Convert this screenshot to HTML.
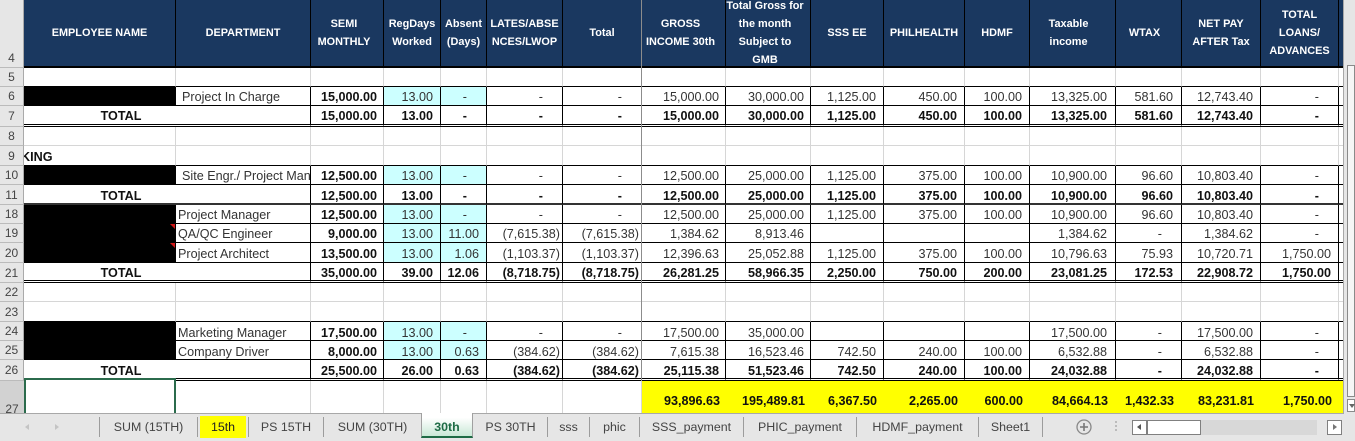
<!DOCTYPE html>
<html><head><meta charset="utf-8"><style>
html,body{margin:0;padding:0;width:1355px;height:441px;overflow:hidden;background:#e6e6e6;font-family:"Liberation Sans",sans-serif}
#wrap{position:absolute;left:0;top:0;width:1343px;height:413px;overflow:hidden;background:#fff}
table{position:absolute;left:0;top:0;border-collapse:separate;border-spacing:0;table-layout:fixed;width:1343px;font-size:12.6px;color:#333}
td{box-sizing:border-box;padding:2px 7px 0 0;border-right:1px solid #d6d6d6;border-bottom:1px solid #d6d6d6;white-space:nowrap;overflow:hidden;text-align:right;line-height:14px;vertical-align:middle}
td.h{background:#e6e6e6;border-right:1px solid #aaa;border-bottom:1px solid #bbb;text-align:center;padding:0;font-size:12px;color:#444}
tr.head td{background:#1a3860;color:#fff;font-weight:bold;font-size:10.9px;line-height:18px;text-align:center;padding:0;border-right:1px solid #000;border-bottom:2px solid #000;overflow:visible;white-space:normal}
tr.head td.h{background:#e6e6e6;color:#444;font-weight:normal;font-size:12px;border-right:1px solid #aaa;border-bottom:1px solid #bbb;vertical-align:bottom;line-height:17px}
tr.head td div{height:66px;display:flex;align-items:center;justify-content:center}
tr.d td:not(.h){border-right:1px solid #000;border-bottom:1px solid #000}
tr.t td:not(.h){border-right:1px solid #000;border-bottom:1px solid #000;font-weight:bold;color:#111}
tr.dbl td:not(.h){border-bottom:3px double #000}
tr.above td:not(.h){border-bottom:1px solid #000}
tr.thick td:not(.h){border-bottom:2px solid #333}
tr.lo td:not(.h){padding-top:4px}
tr td:nth-last-child(15){padding-right:6px}
tr td:nth-last-child(10),tr td:nth-last-child(9){padding-right:6px}
tr td:nth-last-child(5),tr td:nth-last-child(4){padding-right:8px}
tr td:last-child{border-right:0!important}
td.n{text-align:left;padding-left:0;padding-right:0}
td.n1{text-align:left;padding-left:6px!important;padding-right:0!important}
td.n2{text-align:left;padding-left:2px!important;padding-right:0!important}
td.b{background:#ccffff}
td.bk{background:#000;padding:0}
td.d{padding-right:19px!important}
td.p{padding-right:2px!important}
td.s{font-weight:bold;color:#111}
td.tt{text-align:center;font-weight:bold;padding-right:92px!important;color:#111}
tr.y td{border:0!important;padding-top:8px;color:#111;font-weight:bold}
tr.y td:not(.h):not(.e){background:#ffff00}
tr.y td.e{background:#fff;border-right:1px solid #d6d6d6!important}
tr.y td.h{background:#d2d2d2;vertical-align:bottom;font-weight:normal;color:#444;padding:0;line-height:8px;height:32px}
.a{position:absolute}
.tab{position:absolute;top:419px;height:16px;line-height:16px;font-size:12.4px;color:#444;text-align:center;white-space:nowrap}
.sep{position:absolute;top:417px;height:20px;width:1px;background:#9c9c9c}
</style></head><body>
<div id="wrap">
<table>
<colgroup><col style="width:24px"><col style="width:152px"><col style="width:135px"><col style="width:73px"><col style="width:57px"><col style="width:46px"><col style="width:76px"><col style="width:79px"><col style="width:84px"><col style="width:85px"><col style="width:73px"><col style="width:81px"><col style="width:65px"><col style="width:86px"><col style="width:66px"><col style="width:79px"><col style="width:78px"><col style="width:4px"></colgroup>
<tr class="head" style="height:68px"><td class="h">4</td><td><div>EMPLOYEE NAME</div></td><td><div>DEPARTMENT</div></td><td><div>SEMI<br>MONTHLY</div></td><td><div>RegDays<br>Worked</div></td><td><div>Absent<br>(Days)</div></td><td><div>LATES/ABSE<br>NCES/LWOP</div></td><td><div>Total</div></td><td><div>GROSS<br>INCOME 30th</div></td><td><div>Total Gross for<br>the month<br>Subject to<br>GMB</div></td><td><div>SSS EE</div></td><td><div>PHILHEALTH</div></td><td><div>HDMF</div></td><td><div>Taxable<br>income</div></td><td><div>WTAX</div></td><td><div>NET PAY<br>AFTER Tax</div></td><td><div>TOTAL<br>LOANS/<br>ADVANCES</div></td><td><div></div></td></tr>
<tr class="above" style="height:19px"><td class="h" style="height:19px">5</td><td></td><td></td><td></td><td></td><td></td><td></td><td></td><td></td><td></td><td></td><td></td><td></td><td></td><td></td><td></td><td></td><td></td></tr>
<tr class="d" style="height:19px"><td class="h">6</td><td class="bk"></td><td class="n1">Project In Charge</td><td class="s">15,000.00</td><td class="b">13.00</td><td class="b d">-</td><td class="d">-</td><td class="d">-</td><td>15,000.00</td><td>30,000.00</td><td>1,125.00</td><td>450.00</td><td>100.00</td><td>13,325.00</td><td>581.60</td><td>12,743.40</td><td class="d">-</td><td></td></tr>
<tr class="t dbl" style="height:21px"><td class="h">7</td><td class="tt" colspan="2">TOTAL</td><td>15,000.00</td><td>13.00</td><td class="d">-</td><td class="d">-</td><td class="d">-</td><td>15,000.00</td><td>30,000.00</td><td>1,125.00</td><td>450.00</td><td>100.00</td><td>13,325.00</td><td>581.60</td><td>12,743.40</td><td class="d">-</td><td></td></tr>
<tr style="height:19px"><td class="h">8</td><td></td><td></td><td></td><td></td><td></td><td></td><td></td><td></td><td></td><td></td><td></td><td></td><td></td><td></td><td></td><td></td><td></td></tr>
<tr class="above" style="height:20px"><td class="h">9</td><td class="n" style="font-weight:bold;color:#111;text-indent:-3px">KING</td><td></td><td></td><td></td><td></td><td></td><td></td><td></td><td></td><td></td><td></td><td></td><td></td><td></td><td></td><td></td><td></td></tr>
<tr class="d" style="height:19px"><td class="h">10</td><td class="bk"></td><td class="n1">Site Engr./ Project Manager</td><td class="s">12,500.00</td><td class="b">13.00</td><td class="b d">-</td><td class="d">-</td><td class="d">-</td><td>12,500.00</td><td>25,000.00</td><td>1,125.00</td><td>375.00</td><td>100.00</td><td>10,900.00</td><td>96.60</td><td>10,803.40</td><td class="d">-</td><td></td></tr>
<tr class="t thick lo" style="height:20px"><td class="h">11</td><td class="tt" colspan="2">TOTAL</td><td>12,500.00</td><td>13.00</td><td class="d">-</td><td class="d">-</td><td class="d">-</td><td>12,500.00</td><td>25,000.00</td><td>1,125.00</td><td>375.00</td><td>100.00</td><td>10,900.00</td><td>96.60</td><td>10,803.40</td><td class="d">-</td><td></td></tr>
<tr class="d" style="height:19px"><td class="h">18</td><td class="bk" style="border-bottom-color:#000"></td><td class="n2">Project Manager</td><td class="s">12,500.00</td><td class="b">13.00</td><td class="b d">-</td><td class="d">-</td><td class="d">-</td><td>12,500.00</td><td>25,000.00</td><td>1,125.00</td><td>375.00</td><td>100.00</td><td>10,900.00</td><td>96.60</td><td>10,803.40</td><td class="d">-</td><td></td></tr>
<tr class="d" style="height:19px"><td class="h">19</td><td class="bk"></td><td class="n2">QA/QC Engineer</td><td class="s">9,000.00</td><td class="b">13.00</td><td class="b">11.00</td><td class="p">(7,615.38)</td><td class="p">(7,615.38)</td><td>1,384.62</td><td>8,913.46</td><td></td><td></td><td></td><td>1,384.62</td><td class="d">-</td><td>1,384.62</td><td class="d">-</td><td></td></tr>
<tr class="d" style="height:20px"><td class="h">20</td><td class="bk"></td><td class="n2">Project Architect</td><td class="s">13,500.00</td><td class="b">13.00</td><td class="b">1.06</td><td class="p">(1,103.37)</td><td class="p">(1,103.37)</td><td>12,396.63</td><td>25,052.88</td><td>1,125.00</td><td>375.00</td><td>100.00</td><td>10,796.63</td><td>75.93</td><td>10,720.71</td><td>1,750.00</td><td></td></tr>
<tr class="t dbl" style="height:20px"><td class="h">21</td><td class="tt" colspan="2">TOTAL</td><td>35,000.00</td><td>39.00</td><td>12.06</td><td class="p">(8,718.75)</td><td class="p">(8,718.75)</td><td>26,281.25</td><td>58,966.35</td><td>2,250.00</td><td>750.00</td><td>200.00</td><td>23,081.25</td><td>172.53</td><td>22,908.72</td><td>1,750.00</td><td></td></tr>
<tr style="height:19px"><td class="h">22</td><td></td><td></td><td></td><td></td><td></td><td></td><td></td><td></td><td></td><td></td><td></td><td></td><td></td><td></td><td></td><td></td><td></td></tr>
<tr class="above" style="height:20px"><td class="h">23</td><td></td><td></td><td></td><td></td><td></td><td></td><td></td><td></td><td></td><td></td><td></td><td></td><td></td><td></td><td></td><td></td><td></td></tr>
<tr class="d lo" style="height:19px"><td class="h">24</td><td class="bk"></td><td class="n2">Marketing Manager</td><td class="s">17,500.00</td><td class="b">13.00</td><td class="b d">-</td><td class="d">-</td><td class="d">-</td><td>17,500.00</td><td>35,000.00</td><td></td><td></td><td></td><td>17,500.00</td><td class="d">-</td><td>17,500.00</td><td class="d">-</td><td></td></tr>
<tr class="d lo" style="height:19px"><td class="h">25</td><td class="bk"></td><td class="n2">Company Driver</td><td class="s">8,000.00</td><td class="b">13.00</td><td class="b">0.63</td><td class="p">(384.62)</td><td class="p">(384.62)</td><td>7,615.38</td><td>16,523.46</td><td>742.50</td><td>240.00</td><td>100.00</td><td>6,532.88</td><td class="d">-</td><td>6,532.88</td><td class="d">-</td><td></td></tr>
<tr class="t dbl lo" style="height:21px"><td class="h">26</td><td class="tt" colspan="2">TOTAL</td><td>25,500.00</td><td>26.00</td><td>0.63</td><td class="p">(384.62)</td><td class="p">(384.62)</td><td>25,115.38</td><td>51,523.46</td><td>742.50</td><td>240.00</td><td>100.00</td><td>24,032.88</td><td class="d">-</td><td>24,032.88</td><td class="d">-</td><td></td></tr>
<tr class="y" style="height:32px"><td class="h">27</td><td class="e"></td><td class="e"></td><td class="e"></td><td class="e"></td><td class="e"></td><td class="e"></td><td class="e"></td><td>93,896.63</td><td>195,489.81</td><td>6,367.50</td><td>2,265.00</td><td>600.00</td><td>84,664.13</td><td>1,432.33</td><td>83,231.81</td><td>1,750.00</td><td></td></tr>
</table>
<div class="a" style="left:170px;top:224px;width:5px;height:5px;background:#d01818;clip-path:polygon(0 0,100% 0,100% 100%)"></div>
<div class="a" style="left:170px;top:243px;width:5px;height:5px;background:#d01818;clip-path:polygon(0 0,100% 0,100% 100%)"></div>
<div class="a" style="left:641px;top:0;width:1px;height:381px;background:#8c8c8c"></div>
<div class="a" style="left:24px;top:378px;width:148px;height:40px;border:2px solid #2b6b4c;background:#fff"></div>
</div>

<div class="a" style="left:0;top:413px;width:1343px;height:1px;background:#a8a8a8"></div>
<div class="a" style="left:1343px;top:0;width:1px;height:414px;background:#a8a8a8"></div>
<div class="a" style="left:1347px;top:65px;width:8px;height:332px;background:#f6f6f6;border:1px solid #8a8a8a;box-sizing:border-box"></div>
<div class="a" style="left:1347px;top:399px;width:8px;height:13px;background:#fff;border:1px solid #8a8a8a;box-sizing:border-box"></div>
<div class="a" style="left:1349px;top:404px;width:0;height:0;border-left:3px solid transparent;border-right:3px solid transparent;border-top:4px solid #666"></div>

<div class="a" style="left:25px;top:424px;width:0;height:0;border-top:3px solid transparent;border-bottom:3px solid transparent;border-right:4px solid #c4c4c4"></div>
<div class="a" style="left:55px;top:424px;width:0;height:0;border-top:3px solid transparent;border-bottom:3px solid transparent;border-left:4px solid #c4c4c4"></div>

<div class="sep" style="left:99px"></div>
<div class="sep" style="left:197px"></div>
<div class="sep" style="left:248px"></div>
<div class="sep" style="left:323px"></div>
<div class="sep" style="left:547px"></div>
<div class="sep" style="left:589px"></div>
<div class="sep" style="left:639px"></div>
<div class="sep" style="left:743px"></div>
<div class="sep" style="left:856px"></div>
<div class="sep" style="left:978px"></div>
<div class="sep" style="left:1042px"></div>

<div class="a" style="left:200px;top:416px;width:46px;height:22px;background:#ffff00"></div>
<div class="a" style="left:421px;top:413px;width:52px;height:25px;box-sizing:border-box;background:linear-gradient(#fff 20%,#c9e8d6);border-left:1px solid #a0a0a0;border-right:1px solid #a0a0a0;border-bottom:2px solid #1e6b45"></div>

<div class="tab" style="left:100px;width:97px">SUM (15TH)</div>
<div class="tab" style="left:200px;width:46px;color:#222">15th</div>
<div class="tab" style="left:249px;width:74px">PS 15TH</div>
<div class="tab" style="left:324px;width:97px">SUM (30TH)</div>
<div class="tab" style="left:421px;width:52px;color:#1e6b45;font-weight:bold">30th</div>
<div class="tab" style="left:474px;width:73px">PS 30TH</div>
<div class="tab" style="left:548px;width:41px">sss</div>
<div class="tab" style="left:590px;width:49px">phic</div>
<div class="tab" style="left:640px;width:103px">SSS_payment</div>
<div class="tab" style="left:744px;width:112px">PHIC_payment</div>
<div class="tab" style="left:857px;width:121px">HDMF_payment</div>
<div class="tab" style="left:979px;width:63px">Sheet1</div>

<svg class="a" style="left:1075px;top:418px" width="18" height="18" viewBox="0 0 18 18"><circle cx="9" cy="9" r="7" fill="none" stroke="#888" stroke-width="1.3"/><path d="M5 9H13M9 5V13" stroke="#777" stroke-width="1.6"/></svg>
<div class="a" style="left:1115px;top:421px;width:2px;height:2px;background:#bbb;box-shadow:0 4px 0 #bbb,0 8px 0 #bbb"></div>

<div class="a" style="left:1147px;top:420px;width:170px;height:15px;background:#d8d8d8"></div>
<div class="a" style="left:1132px;top:420px;width:69px;height:15px;box-sizing:border-box;background:#fff;border:1px solid #808080"></div>
<div class="a" style="left:1146px;top:420px;width:2px;height:15px;background:#808080"></div>
<div class="a" style="left:1137px;top:424px;width:0;height:0;border-top:3.5px solid transparent;border-bottom:3.5px solid transparent;border-right:4px solid #555"></div>
<div class="a" style="left:1327px;top:420px;width:15px;height:15px;box-sizing:border-box;background:#fff;border:1px solid #808080"></div>
<div class="a" style="left:1333px;top:424px;width:0;height:0;border-top:3.5px solid transparent;border-bottom:3.5px solid transparent;border-left:4px solid #777"></div>
</body></html>
